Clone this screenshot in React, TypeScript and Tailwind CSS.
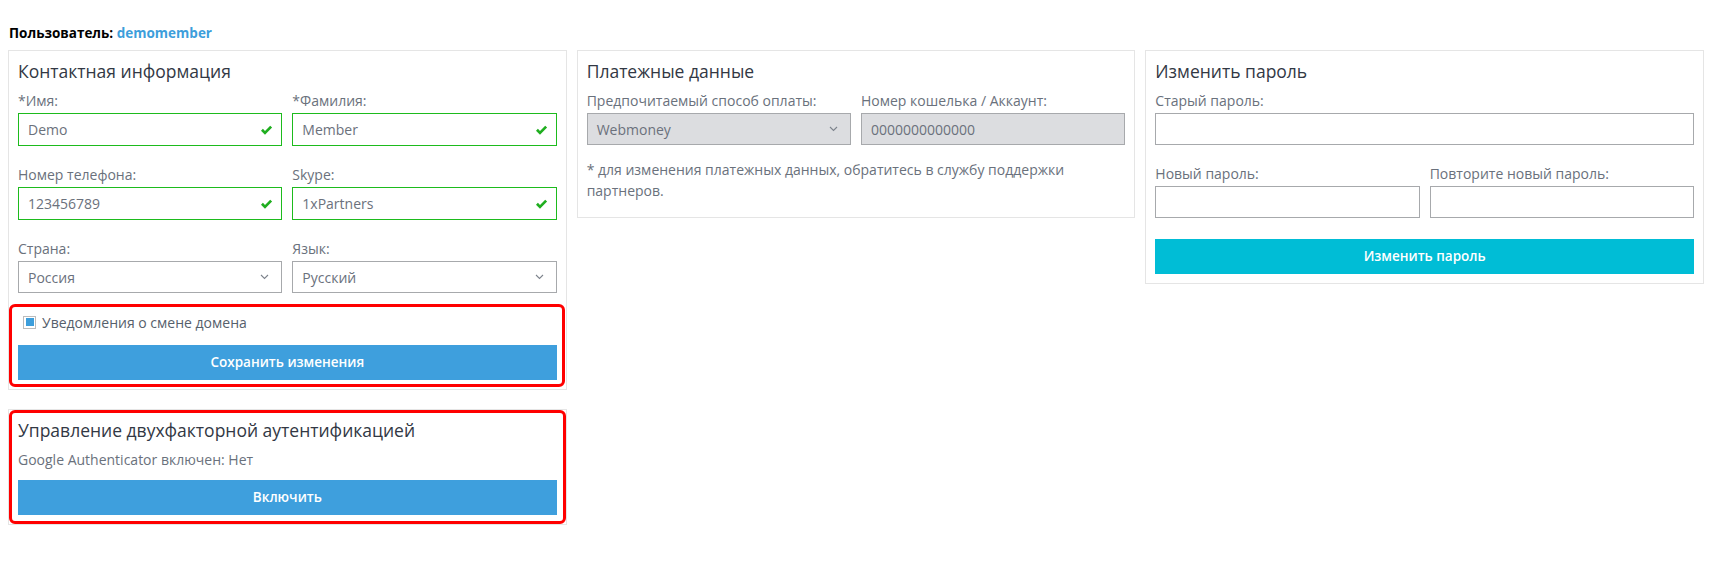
import React from "react";

const Check = () => (
  <svg width="13" height="11" viewBox="0 0 13 11" className="absolute right-[8px] top-1/2 -translate-y-1/2">
    <path d="M1 6.2 L2.9 4.3 L5 6.4 L10.2 1.2 L12.1 3.1 L5 10.2 Z" fill="#1fae1f" />
  </svg>
);

const Chevron = () => (
  <svg width="9" height="6" viewBox="0 0 9 6" className="absolute right-[12px] top-1/2 -translate-y-1/2">
    <path d="M1 1 L4.5 4.5 L8 1" fill="none" stroke="#7d838c" strokeWidth="1.1" />
  </svg>
);

function Label({ children }: { children: React.ReactNode }) {
  return <label className="block text-[14px] leading-5 text-[#6a717c] mb-[2px]">{children}</label>;
}

function ValidInput({ label, value }: { label: string; value: string }) {
  return (
    <div>
      <Label>{label}</Label>
      <div className="relative h-[33px] border border-[#1dbb1d] bg-white flex items-center pl-[9px] text-[14px] text-[#6b717c]">
        {value}
        <Check />
      </div>
    </div>
  );
}

function SelectBox({ label, value, disabled }: { label: string; value: string; disabled?: boolean }) {
  return (
    <div>
      <Label>{label}</Label>
      <div
        className={
          disabled
            ? "relative h-[32px] border border-[#a7a9ac] bg-[#dcdde0] flex items-center pl-[9px] text-[14px] text-[#6b717c]"
            : "relative h-[32px] border border-[#a7a9ac] bg-white flex items-center pl-[9px] text-[14px] text-[#6b717c]"
        }
      >
        {value}
        <Chevron />
      </div>
    </div>
  );
}

function TextBox({ label, value, disabled }: { label: string; value?: string; disabled?: boolean }) {
  return (
    <div>
      <Label>{label}</Label>
      <div
        className={
          disabled
            ? "h-[32px] border border-[#a7a9ac] bg-[#dcdde0] flex items-center pl-[9px] text-[14px] text-[#6b717c]"
            : "h-[32px] border border-[#a7a9ac] bg-white flex items-center pl-[9px] text-[14px] text-[#6b717c]"
        }
      >
        {value}
      </div>
    </div>
  );
}

export default function App() {
  return (
    <div className="min-h-screen bg-white font-['Open_Sans',sans-serif]">
      <div className="pt-6 pb-2 pl-[9px] text-[13.5px] leading-[18px] font-bold text-black">
        Пользователь: <span className="text-[#3d9edb]">demomember</span>
      </div>

      <div className="grid grid-cols-3 gap-[10px] px-2 items-start">
        {/* contacts */}
        <div className="flex flex-col gap-[19px]">
          <div className="border border-[#e5e5e5] p-[9px]">
            <h2 className="text-[17.5px] leading-[22px] text-[#323844] mb-[9px]">Контактная информация</h2>
            <div className="grid grid-cols-2 gap-x-[10px] gap-y-[19px]">
              <ValidInput label="*Имя:" value="Demo" />
              <ValidInput label="*Фамилия:" value="Member" />
              <ValidInput label="Номер телефона:" value="123456789" />
              <ValidInput label="Skype:" value="1xPartners" />
              <SelectBox label="Страна:" value="Россия" />
              <SelectBox label="Язык:" value="Русский" />
            </div>
            <div className="relative mt-[20px]">
              <div className="flex items-center h-[18px] pl-[5px]">
                <span className="w-[13px] h-[13px] border border-[#bcbcbc] bg-white flex items-center justify-center">
                  <span className="w-[8px] h-[8px] bg-[#3d9edb]" />
                </span>
                <span className="ml-[6px] text-[14px] text-[#56606c]">Уведомления о смене домена</span>
              </div>
              <button className="mt-[14px] w-full h-[35px] bg-[#3e9fdd] text-white text-[13.5px] font-semibold">
                Сохранить изменения
              </button>
              <div className="absolute -left-[9px] -right-[8px] -top-[9px] -bottom-[7px] border-[3px] border-[#ff0000] rounded-[6px] pointer-events-none" />
            </div>
          </div>

          <div className="relative border border-[#e5e5e5] p-[9px]">
            <h2 className="text-[17.5px] leading-[22px] text-[#323844] mb-[9px]">Управление двухфакторной аутентификацией</h2>
            <p className="text-[14px] leading-5 text-[#6a717c]">Google Authenticator включен: Нет</p>
            <button className="mt-[10px] w-full h-[35px] bg-[#3e9fdd] text-white text-[13.5px] font-semibold">Включить</button>
            <div className="absolute inset-0 border-[3px] border-[#ff0000] rounded-[6px] pointer-events-none" />
          </div>
        </div>

        {/* payment */}
        <div className="border border-[#e5e5e5] p-[9px]">
          <h2 className="text-[17.5px] leading-[22px] text-[#323844] mb-[9px]">Платежные данные</h2>
          <div className="grid grid-cols-2 gap-x-[10px]">
            <SelectBox label="Предпочитаемый способ оплаты:" value="Webmoney" disabled />
            <TextBox label="Номер кошелька / Аккаунт:" value="0000000000000" disabled />
          </div>
          <p className="mt-[14px] mb-[7px] text-[14px] leading-[21px] text-[#6a717c] pr-[60px]">
            * для изменения платежных данных, обратитесь в службу поддержки партнеров.
          </p>
        </div>

        {/* password */}
        <div className="border border-[#e5e5e5] p-[9px]">
          <h2 className="text-[17.5px] leading-[22px] text-[#323844] mb-[9px]">Изменить пароль</h2>
          <div className="grid grid-cols-2 gap-x-[10px] gap-y-[19px]">
            <div className="col-span-2">
              <TextBox label="Старый пароль:" />
            </div>
            <TextBox label="Новый пароль:" />
            <TextBox label="Повторите новый пароль:" />
          </div>
          <button className="mt-[21px] w-full h-[35px] bg-[#00bdd6] text-white text-[13.5px] font-semibold">Изменить пароль</button>
        </div>
      </div>
    </div>
  );
}
